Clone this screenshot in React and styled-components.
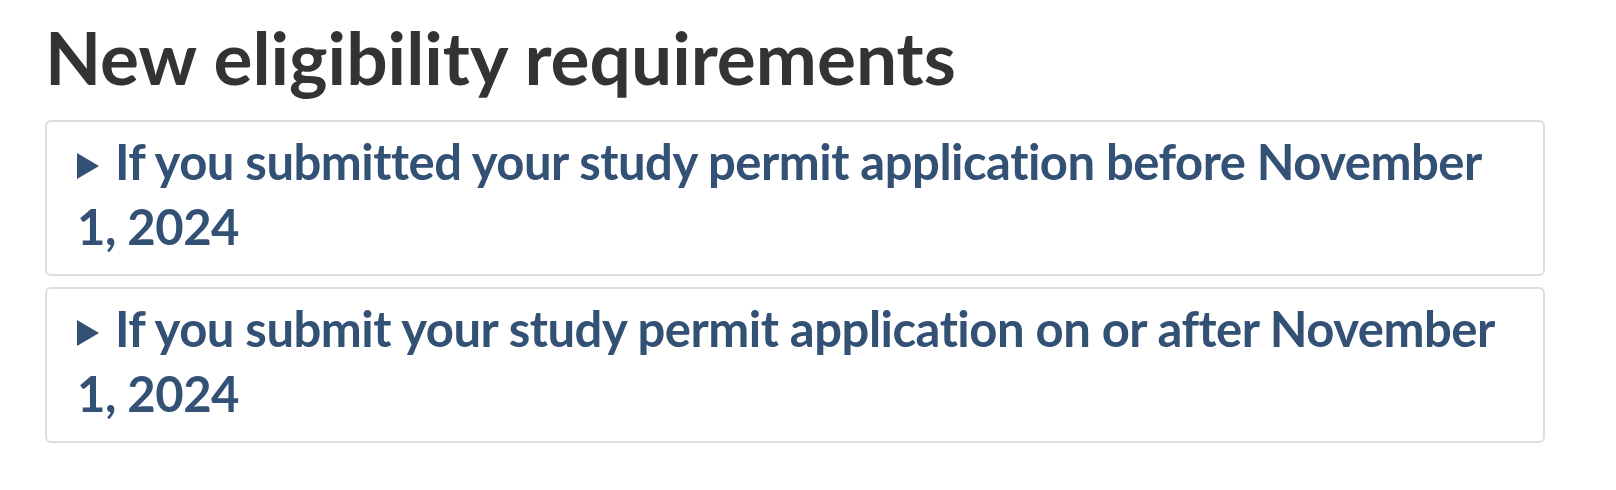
import styled, { createGlobalStyle } from "styled-components";

const GlobalStyle = createGlobalStyle`
  body {
    margin: 0;
    background: #fff;
    font-family: Lato, "Noto Sans", sans-serif;
    font-variant-ligatures: none;
  }
`;

const items = [
  "If you submitted your study permit application before November 1, 2024",
  "If you submit your study permit application on or after November 1, 2024",
];

const App = () => {
  return (
    <Page>
      <GlobalStyle />
      <Heading>New eligibility requirements</Heading>
      {items.map((text) => (
        <Details key={text}>
          <Summary>{text}</Summary>
        </Details>
      ))}
    </Page>
  );
};

const Page = styled.main`
  padding: 0 70px 0 45px;
  width: 1500px;
`;

const Heading = styled.h2`
  margin: 17px 0 23px;
  font-family: Lato, sans-serif;
  font-weight: 700;
  font-size: 73px;
  line-height: 1.1;
  color: #333;
`;

const Details = styled.details`
  border: 2px solid #ddd;
  border-radius: 6px;
  margin-bottom: 11px;
`;

const Summary = styled.summary`
  display: block;
  list-style: none;
  padding: 7px 30px 15px 30px;
  font-family: Lato, sans-serif;
  font-weight: 700;
  font-size: 49px;
  letter-spacing: -0.5px;
  line-height: 65px;
  color: #335075;
  cursor: pointer;

  &::-webkit-details-marker {
    display: none;
  }

  &::before {
    content: "";
    display: inline-block;
    width: 0;
    height: 0;
    border-left: 22px solid currentColor;
    border-top: 13px solid transparent;
    border-bottom: 13px solid transparent;
    margin: 0 16px 1px 0;
  }
`;

export default App;
